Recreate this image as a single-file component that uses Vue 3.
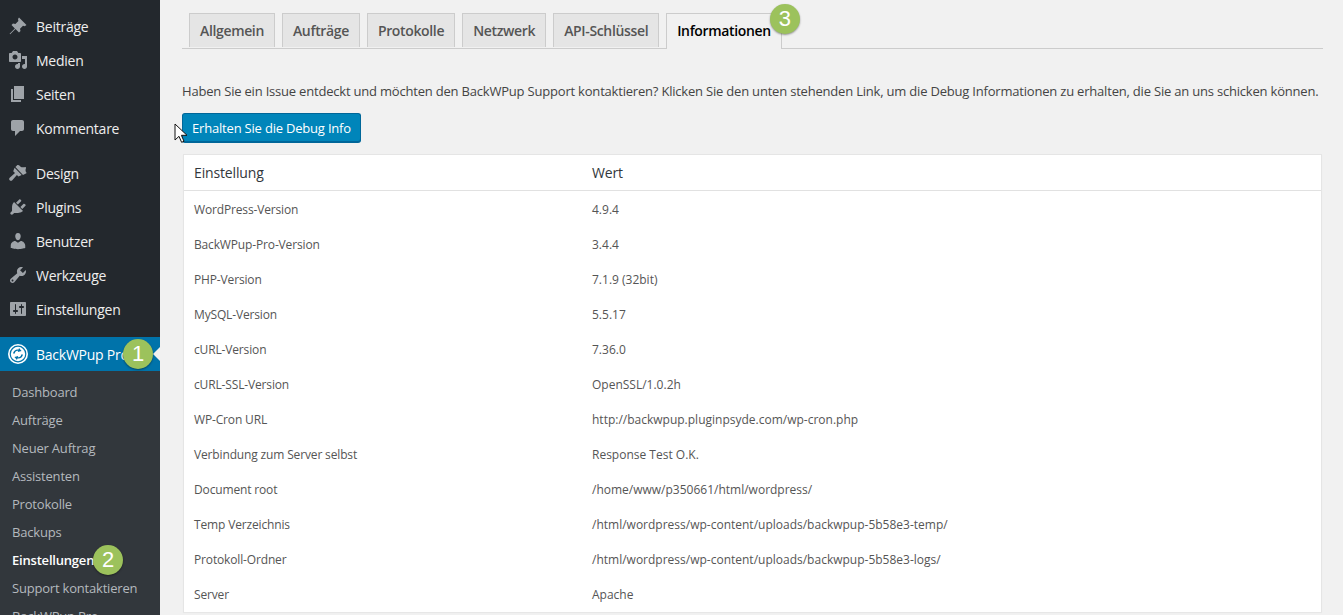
<script setup>
const top1 = [
  { label: 'Beiträge', d: 'M11 1.5 18.5 9 16.7 10.3 15 9.8 12 12.8 12.5 15 11 16.5 7.5 13 2.2 18.3 1.6 17.7 6.9 12.4 3.5 9 5 7.5 7.4 8 10.4 5 10 3z' },
  { label: 'Medien', d: 'M13 11V4c0-.55-.45-1-1-1h-1.67L9 1H5L3.67 3H2c-.55 0-1 .45-1 1v7c0 .55.45 1 1 1h10c.55 0 1-.45 1-1zM7 4.5c1.38 0 2.5 1.12 2.5 2.5S8.38 9.5 7 9.5 4.5 8.38 4.5 7 5.62 4.5 7 4.5zM14 6h5v10.5c0 1.38-1.12 2.5-2.5 2.5S14 17.88 14 16.5s1.12-2.5 2.5-2.5c.17 0 .34.02.5.05V9h-3V6zm-4 8.05V13h2v3.5c0 1.38-1.12 2.5-2.5 2.5S7 17.88 7 16.5 8.12 14 9.5 14c.17 0 .34.02.5.05z' },
  { label: 'Seiten', d: 'M6 15V2h10v13H6zm-1 1h8v2H3V5h2v11z' },
  { label: 'Kommentare', d: 'M5 2h9c1.1 0 2 .9 2 2v7c0 1.1-.9 2-2 2h-2l-5 5v-5H5c-1.1 0-2-.9-2-2V4c0-1.1.9-2 2-2z' }
]
const top2 = [
  { label: 'Design', d: 'M7.4 4 8.9 2.5c.8-.8 2.2-.3 3.4.9 1.2 1.1 3 1.2 5.2.5.4.2.6.5.5 1-.8 2-.5 3.5.4 4.6.1.3.1.5 0 .7l-3.4 1.8zM6.6 4.8l7.1 7.1-3.2 1.7-1.6-1.6-4.6 5.3c-.7.7-1.9.7-2.6 0s-.7-1.9 0-2.6L7 10.1 5.2 8.3z' },
  { label: 'Plugins', d: 'M13.11 4.36L9.87 7.6 8 5.73l3.24-3.24c.35-.34 1.05-.2 1.56.32.52.51.66 1.21.31 1.55zm-8 1.77l.91-1.12 9.01 9.01-1.19.84c-.71.71-2.63 1.16-3.82 1.16H6.14L4.9 17.26c-.59.59-1.54.59-2.12 0-.59-.58-.59-1.53 0-2.12l1.24-1.24v-3.88c0-1.13.4-3.19 1.09-3.89zm7.26 3.97l3.24-3.24c.34-.35 1.04-.21 1.55.31.52.51.66 1.21.31 1.55l-3.24 3.25z' },
  { label: 'Benutzer', d: 'M10 9.25c-2.27 0-2.73-3.44-2.73-3.44C7 4.02 7.82 2 9.97 2c2.16 0 2.98 2.02 2.71 3.81 0 0-.41 3.44-2.68 3.44zm0 2.57L12.72 10c2.39 0 4.52 2.33 4.52 4.53v2.49s-3.65 1.13-7.24 1.13c-3.65 0-7.24-1.13-7.24-1.13v-2.49c0-2.25 1.94-4.48 4.47-4.48z' },
  { label: 'Werkzeuge', d: 'M16.68 9.77c-1.34 1.34-3.3 1.67-4.95.99l-5.41 6.52c-.99.99-2.59.99-3.58 0s-.99-2.59 0-3.57l6.52-5.42c-.68-1.65-.35-3.61.99-4.95 1.28-1.28 3.12-1.62 4.72-1.06l-2.89 2.89 2.82 2.82 2.86-2.87c.53 1.58.18 3.39-1.08 4.67zM3.81 16.21c.4.39 1.04.39 1.43 0 .4-.4.4-1.04 0-1.43-.39-.4-1.03-.4-1.43 0-.39.39-.39 1.03 0 1.43z' },
  { label: 'Einstellungen', d: 'M18 16V4c0-.55-.45-1-1-1H3c-.55 0-1 .45-1 1v12c0 .55.45 1 1 1h14c.55 0 1-.45 1-1zM8 11h1c.55 0 1 .45 1 1s-.45 1-1 1H8v1.5c0 .28-.22.5-.5.5s-.5-.22-.5-.5V13H6c-.55 0-1-.45-1-1s.45-1 1-1h1V5.5c0-.28.22-.5.5-.5s.5.22.5.5V11zm5-2h-1c-.55 0-1-.45-1-1s.45-1 1-1h1V5.5c0-.28.22-.5.5-.5s.5.22.5.5V7h1c.55 0 1 .45 1 1s-.45 1-1 1h-1v5.5c0 .28-.22.5-.5.5s-.5-.22-.5-.5V9z' }
]
const sub = ['Dashboard', 'Aufträge', 'Neuer Auftrag', 'Assistenten', 'Protokolle', 'Backups', 'Einstellungen', 'Support kontaktieren', 'BackWPup Pro']
const tabs = ['Allgemein', 'Aufträge', 'Protokolle', 'Netzwerk', 'API-Schlüssel', 'Informationen']
const rows = [
  ['WordPress-Version', '4.9.4'],
  ['BackWPup-Pro-Version', '3.4.4'],
  ['PHP-Version', '7.1.9 (32bit)'],
  ['MySQL-Version', '5.5.17'],
  ['cURL-Version', '7.36.0'],
  ['cURL-SSL-Version', 'OpenSSL/1.0.2h'],
  ['WP-Cron URL', 'http://backwpup.pluginpsyde.com/wp-cron.php'],
  ['Verbindung zum Server selbst', 'Response Test O.K.'],
  ['Document root', '/home/www/p350661/html/wordpress/'],
  ['Temp Verzeichnis', '/html/wordpress/wp-content/uploads/backwpup-5b58e3-temp/'],
  ['Protokoll-Ordner', '/html/wordpress/wp-content/uploads/backwpup-5b58e3-logs/'],
  ['Server', 'Apache']
]
</script>

<template>
  <div class="page">
    <aside class="side">
      <ul class="menu">
        <li v-for="m in top1" :key="m.label" class="item">
          <svg class="ico" viewBox="0 0 20 20"><path :d="m.d" /></svg>
          <span>{{ m.label }}</span>
        </li>
      </ul>
      <ul class="menu group">
        <li v-for="m in top2" :key="m.label" class="item">
          <svg class="ico" viewBox="0 0 20 20"><path :d="m.d" /></svg>
          <span>{{ m.label }}</span>
        </li>
      </ul>
      <div class="item current">
        <svg class="ico logo" viewBox="0 0 20 20">
          <circle cx="10" cy="10" r="10" fill="#fff" />
          <circle cx="10" cy="10" r="8.4" fill="#0073aa" />
          <circle cx="10" cy="10" r="7.2" fill="#fff" />
          <path d="M5 9.5C5.3 6.8 8 5 10.6 5.6l.4-1.6 2.6 3-3.8 1 .3-1.2C8.400 6.500 7 7.500 6.800 9.500zM15 10.500c-.3 2.700-3 4.500-5.600 3.900l-.4 1.600-2.600-3 3.800-1-.3 1.200c1.700.3 3.100-.7 3.300-2.700z" fill="#0073aa" />
        </svg>
        <span>BackWPup Pro</span>
        <i class="arrow"></i>
        <b class="badge b1">1</b>
      </div>
      <ul class="sub">
        <li v-for="s in sub" :key="s" :class="{ on: s === 'Einstellungen' }">
          {{ s }}
          <b v-if="s === 'Einstellungen'" class="badge b2">2</b>
        </li>
      </ul>
    </aside>

    <main class="main">
      <nav class="tabs">
        <a v-for="t in tabs" :key="t" class="tab" :class="{ active: t === 'Informationen' }">
          {{ t }}
          <b v-if="t === 'Informationen'" class="badge b3">3</b>
        </a>
      </nav>
      <p class="intro">Haben Sie ein Issue entdeckt und möchten den BackWPup Support kontaktieren? Klicken Sie den unten stehenden Link, um die Debug Informationen zu erhalten, die Sie an uns schicken können.</p>
      <div class="btnrow">
        <button class="btn">Erhalten Sie die Debug Info</button>
        <svg class="cursor" width="14" height="21" viewBox="0 0 14 21"><path d="M1 1v16l4-3.700 2.600 6 2.400-1-2.600-6H13z" fill="#fff" stroke="#111" stroke-width="1" /></svg>
      </div>
      <section class="card">
        <div class="row head"><div class="c1">Einstellung</div><div>Wert</div></div>
        <div v-for="r in rows" :key="r[0]" class="row"><div class="c1">{{ r[0] }}</div><div>{{ r[1] }}</div></div>
      </section>
    </main>
  </div>
</template>

<style>
html, body { margin: 0; height: 100%; overflow: hidden; background: #f1f1f1; }
</style>

<style scoped>
.page { display: flex; height: 615px; overflow: hidden; font-family: "Open Sans", "Noto Sans", sans-serif; font-size: 13px; color: #444; background: #f1f1f1; }
.side { width: 160px; flex: none; background: #23282d; padding-top: 9px; box-sizing: border-box; overflow: hidden; }
.menu { list-style: none; margin: 0; padding: 0; }
.group { margin-top: 11px; }
.item { height: 34px; display: flex; align-items: center; color: #eee; font-size: 14px; letter-spacing: -0.25px; position: relative; }
.ico { width: 20px; height: 20px; margin-left: 8px; margin-right: 8px; fill: #9ea3a8; flex: none; }
.current { margin-top: 11px; background: #0073aa; color: #fff; }
.arrow { position: absolute; right: 0; top: 10px; border: 7px solid transparent; border-left-width: 0; border-right-color: #f1f1f1; }
.sub { list-style: none; margin: 0; padding: 7px 0 0; background: #32373c; color: #b4b9be; height: 300px; }
.sub li { height: 28px; line-height: 28px; padding-left: 12px; position: relative; letter-spacing: -0.2px; }
.sub li.on { color: #fff; font-weight: 600; }
.badge { position: absolute; width: 30px; height: 30px; border-radius: 50%; background: #9cc25c; color: #fff; font: 400 22px/30px "Liberation Sans", sans-serif; text-align: center; box-shadow: 0 1px 2px rgba(0,0,0,.4); letter-spacing: 0; }
.b1 { left: 123px; top: 2px; }
.b2 { left: 93px; top: -1px; }
.b3 { right: -19px; top: -10px; }
.main { flex: 1; min-width: 0; padding: 13px 20px 0 22px; }
.tabs { display: flex; gap: 7px; padding-left: 7px; height: 35px; border-bottom: 1px solid #ccc; }
.tab { position: relative; height: 34px; box-sizing: border-box; line-height: 34px; padding: 0 10px; border: 1px solid #ccc; border-bottom: 0; background: #e5e5e5; color: #555; font-weight: 600; font-size: 14px; letter-spacing: -0.35px; }
.tab.active { background: #f1f1f1; color: #000; height: 36px; }
.intro { margin: 33px 0 0; line-height: 18px; font-size: 13px; letter-spacing: -0.2px; white-space: nowrap; }
.btnrow { position: relative; margin-top: 13px; height: 29px; }
.btn { display: block; width: 179px; height: 29px; padding: 0; border: 1px solid #006799; border-bottom-color: #00669a; border-radius: 3px; background: #0085ba; box-shadow: 0 1px 0 #006799; color: #fff; font: inherit; letter-spacing: -0.2px; }
.cursor { position: absolute; left: -8px; top: 10px; }
.card { margin: 12px 1px 0; background: #fff; border: 1px solid #e5e5e5; border-bottom: 0; box-shadow: 0 1px 1px rgba(0,0,0,.04); }
.row { display: flex; height: 35px; align-items: center; padding-left: 10px; font-size: 12px; color: #555; }
.c1 { width: 398px; flex: none; letter-spacing: -0.15px; }
.head { height: 36px; border-bottom: 1px solid #e1e1e1; box-sizing: border-box; font-size: 14px; color: #32373c; margin-bottom: 1px; letter-spacing: -0.2px; }
</style>
